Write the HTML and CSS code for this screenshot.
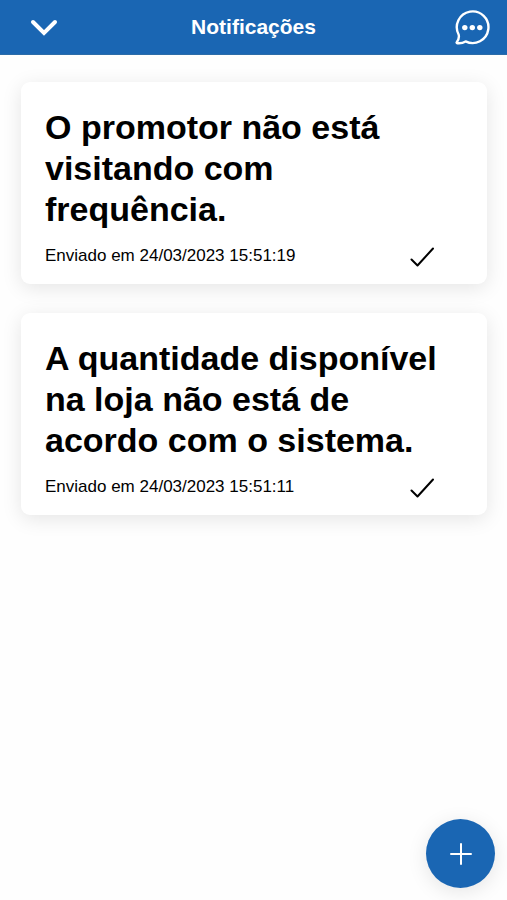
FILE: index.html
```html
<!DOCTYPE html>
<html lang="pt-BR">
<head>
    <meta charset="UTF-8">
    <meta name="viewport" content="width=device-width, initial-scale=1">
    <title>Notificações</title>
    <link rel="stylesheet" href="styles.css">
</head>
<body>
    <header class="topbar">
        <button type="button" class="icon-button back" aria-label="Voltar">
            <svg width="28" height="18" viewBox="0 0 28 18" fill="none" stroke="#fff" stroke-width="4" stroke-linecap="round" stroke-linejoin="miter">
                <path d="M3 4l11 11 11-11"/>
            </svg>
        </button>
        <h1 class="topbar-title">Notificações</h1>
        <button type="button" class="icon-button messages" aria-label="Mensagens">
            <svg width="36" height="36" viewBox="0 0 36 36" fill="none" stroke="#fff" stroke-width="2.4" stroke-linejoin="round">
                <path d="M4.7 25.7A15.8 15.8 0 1 1 11.6 32.4C9 34 6 34.5 3.4 34.2C2.5 34.1 2.4 33.5 2.9 32.9C4.5 30.8 5.3 28.3 4.7 25.7z"/>
                <g fill="#fff" stroke="none">
                    <circle cx="10.8" cy="18.6" r="2.7"/>
                    <circle cx="18.3" cy="18.6" r="2.7"/>
                    <circle cx="25.8" cy="18.6" r="2.7"/>
                </g>
            </svg>
        </button>
    </header>

    <main class="list">
        <article class="card">
            <h2 class="card-title">O promotor não está visitando com frequência.</h2>
            <div class="card-footer">
                <p class="card-date">Enviado em 24/03/2023 15:51:19</p>
                <svg class="check" width="24" height="22" viewBox="0 0 24 22" fill="none" stroke="#000" stroke-width="2" stroke-linecap="round" stroke-linejoin="round">
                    <path d="M1.5 14.5l6 6L23 3.5"/>
                </svg>
            </div>
        </article>
        <article class="card">
            <h2 class="card-title">A quantidade disponível na loja não está de acordo com o sistema.</h2>
            <div class="card-footer">
                <p class="card-date">Enviado em 24/03/2023 15:51:11</p>
                <svg class="check" width="24" height="22" viewBox="0 0 24 22" fill="none" stroke="#000" stroke-width="2" stroke-linecap="round" stroke-linejoin="round">
                    <path d="M1.5 14.5l6 6L23 3.5"/>
                </svg>
            </div>
        </article>
    </main>

    <button type="button" class="add-button" aria-label="Nova notificação">
        <svg width="22" height="22" viewBox="0 0 22 22" fill="none" stroke="#fff" stroke-width="2" stroke-linecap="round">
            <path d="M11 1v20M1 11h20"/>
        </svg>
    </button>
</body>
</html>
```

FILE: styles.css
```css
* {
    box-sizing: border-box;
}
body {
    font-family: "Liberation Sans", Arial, sans-serif;
    background-color: #fefefe;
    color: #000;
    margin: 0;
}
h1, h2, p {
    margin: 0;
}
button {
    border: none;
    padding: 0;
    cursor: pointer;
}
svg {
    display: block;
}
.topbar {
    display: grid;
    grid-template-columns: 58px 1fr 58px;
    align-items: center;
    height: 55px;
    background-color: #1a66b3;
    border-bottom: 1px solid #2c6ca8;
}
.topbar-title {
    color: #fff;
    font-size: 21px;
    line-height: 24px;
    text-align: center;
}
.icon-button {
    display: flex;
    justify-content: flex-end;
    background: none;
}
.messages {
    padding-right: 17px;
}
.list {
    display: flex;
    flex-direction: column;
    gap: 29px;
    padding: 27px 20px 27px 21px;
}
.card {
    padding: 25px 24px 16px;
    background-color: #fff;
    border-radius: 9px;
    box-shadow: 0 4px 20px rgba(0, 0, 0, 0.1);
}
.card-title {
    font-size: 34px;
    line-height: 41px;
}
.card-footer {
    display: flex;
    justify-content: space-between;
    align-items: center;
    margin-top: 14px;
    padding-right: 29px;
}
.card-date {
    font-size: 17px;
    line-height: 24px;
}
.add-button {
    position: fixed;
    right: 12px;
    bottom: 12px;
    display: flex;
    justify-content: center;
    align-items: center;
    width: 69px;
    height: 69px;
    border-radius: 50%;
    background-color: #1a66b3;
    box-shadow: 0 4px 20px rgba(0, 0, 0, 0.1);
}
```
